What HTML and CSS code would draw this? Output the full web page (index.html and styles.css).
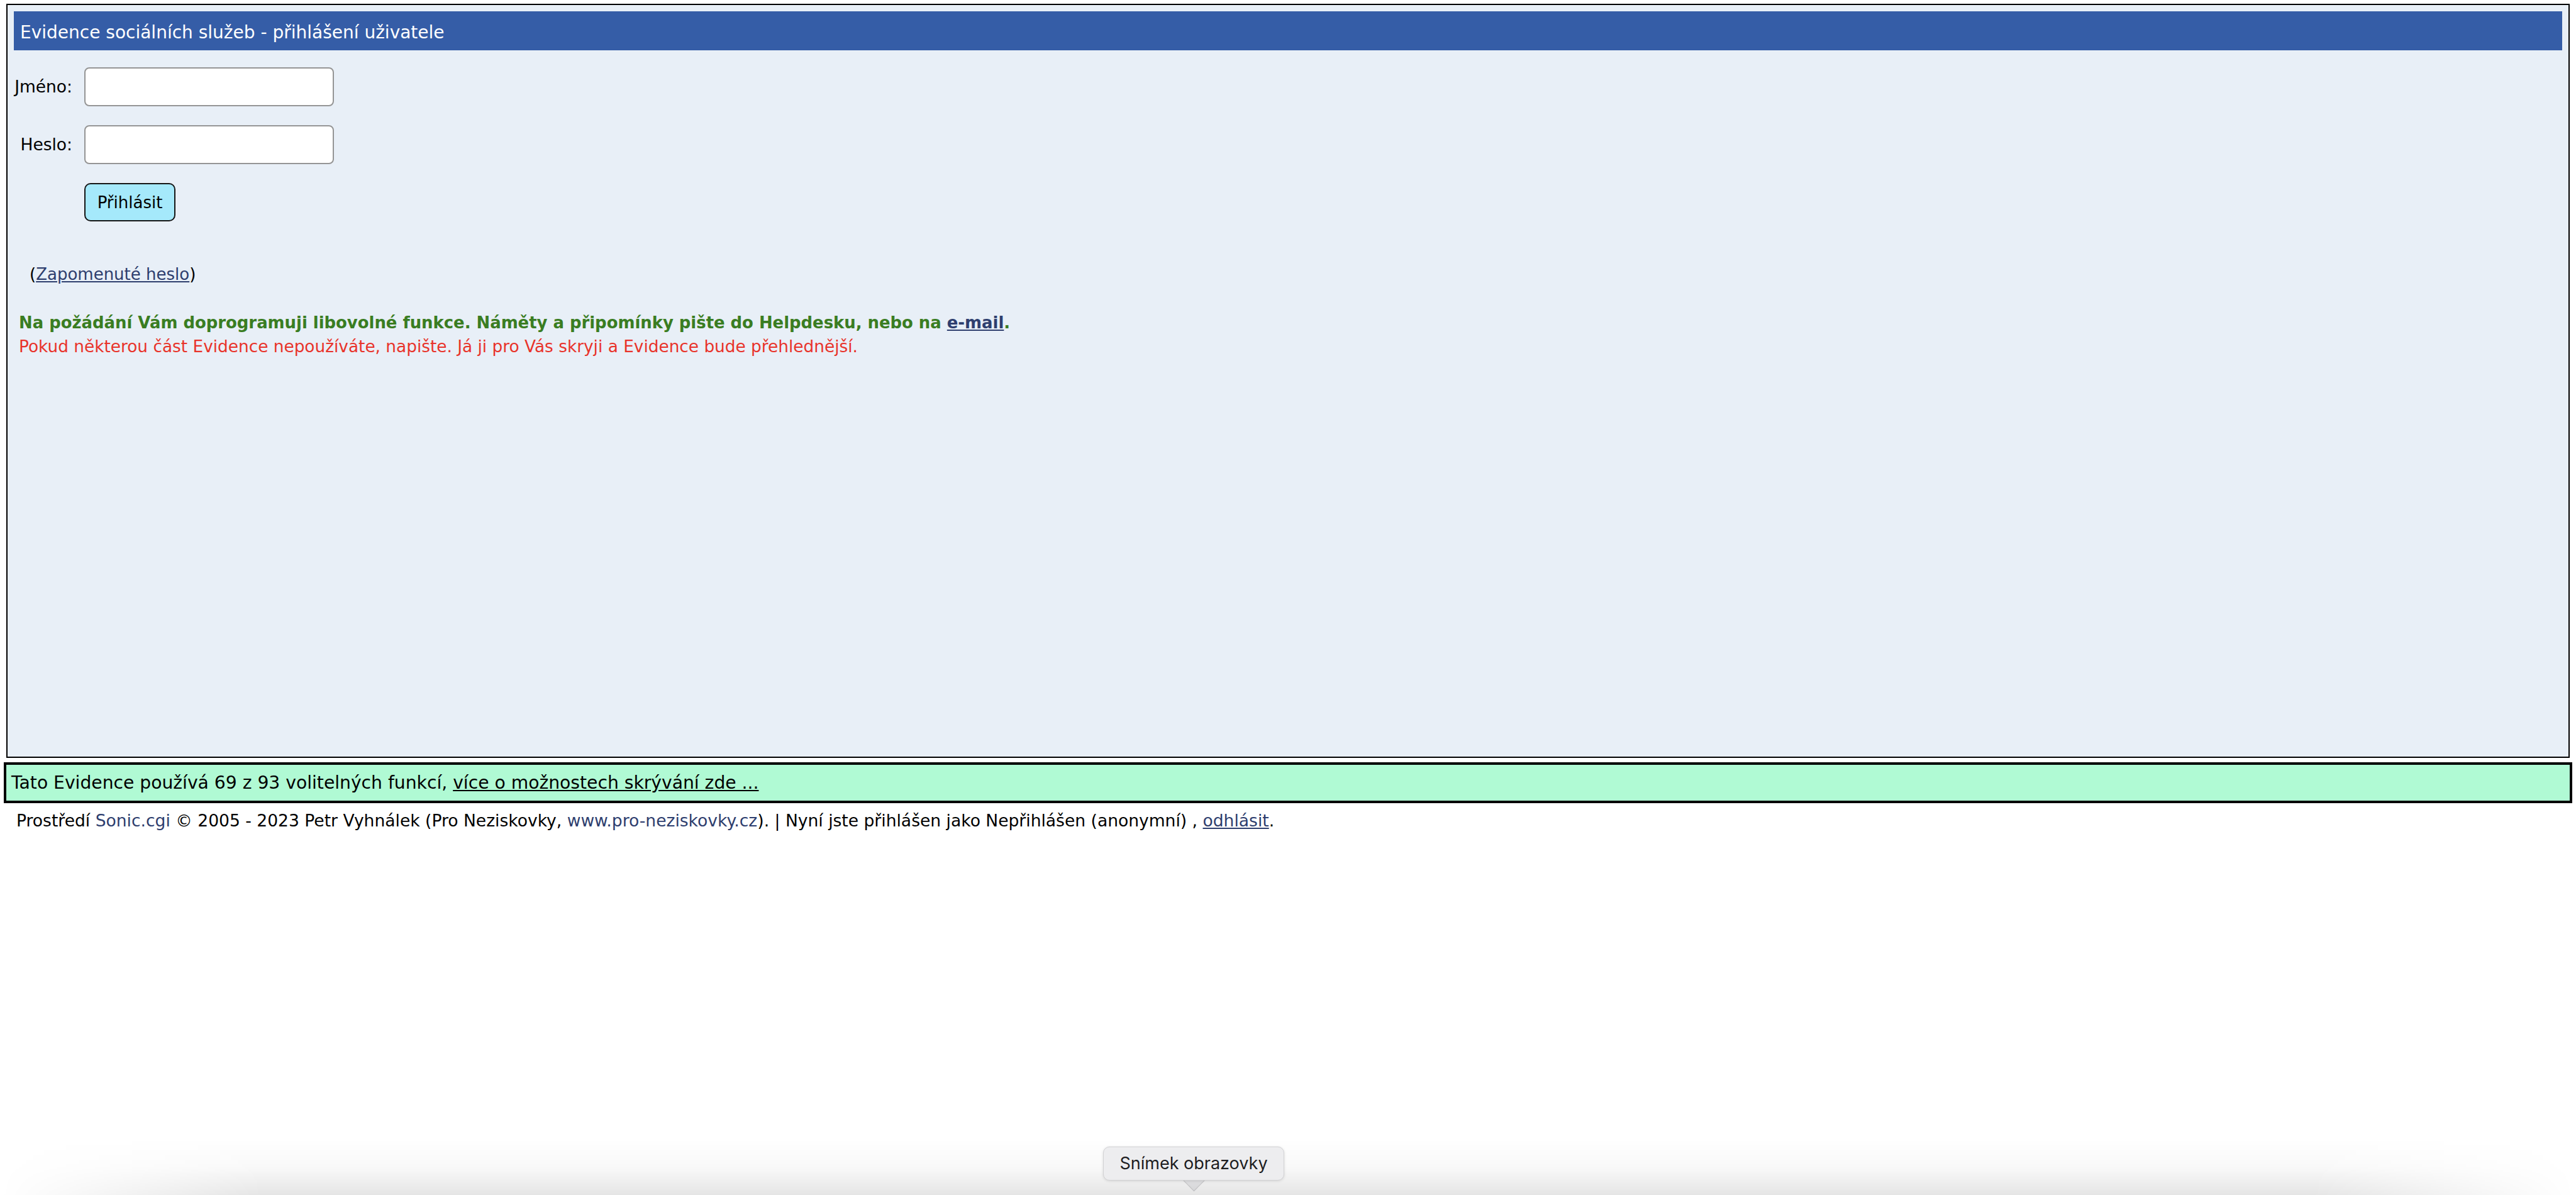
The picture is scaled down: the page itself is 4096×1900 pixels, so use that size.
FILE: index.html
```html
<!DOCTYPE html>
<html lang="cs">
<head>
<meta charset="utf-8">
<title>Evidence sociálních služeb - přihlášení uživatele</title>
<link rel="stylesheet" href="styles.css">
</head>
<body>
<div class="page">
  <div class="panel">
    <div class="panel-title">Evidence sociálních služeb - přihlášení uživatele</div>
    <form class="login-form">
      <label class="login-label" for="jmeno">Jméno:</label>
      <input class="login-input" id="jmeno" type="text">
      <label class="login-label" for="heslo">Heslo:</label>
      <input class="login-input" id="heslo" type="password">
      <button class="login-button" type="button">Přihlásit</button>
    </form>
    <p class="forgot">(<a href="#" class="link">Zapomenuté heslo</a>)</p>
    <p class="note-green">Na požádání Vám doprogramuji libovolné funkce. Náměty a připomínky pište do Helpdesku, nebo na <a href="#" class="link">e-mail</a>.</p>
    <p class="note-red">Pokud některou část Evidence nepoužíváte, napište. Já ji pro Vás skryji a Evidence bude přehlednější.</p>
  </div>
  <div class="features">Tato Evidence používá 69 z 93 volitelných funkcí, <a href="#" class="features-link">více o možnostech skrývání zde ...</a></div>
  <div class="footer">Prostředí <a href="#" class="link plain">Sonic.cgi</a> © 2005 - 2023 Petr Vyhnálek (Pro Neziskovky, <a href="#" class="link plain">www.pro-neziskovky.cz</a>). | Nyní jste přihlášen jako Nepřihlášen (anonymní) , <a href="#" class="link">odhlásit</a>.</div>
</div>
<div class="dock-shade"></div>
<div class="shot-tooltip">Snímek obrazovky</div>
</body>
</html>
```

FILE: styles.css
```css
html, body {
  margin: 0;
  padding: 0;
}

body {
  background: #ffffff;
  font-family: "DejaVu Sans", Verdana, sans-serif;
  font-size: 26px;
  line-height: 32px;
  color: #000000;
  overflow: hidden;
}

.page {
  padding-top: 6px;
}

.panel {
  box-sizing: border-box;
  height: 1199px;
  margin: 0 10px;
  border: 2px solid #000000;
  background: #e8eff7;
  padding: 10px;
}

.panel-title {
  box-sizing: border-box;
  height: 62px;
  padding: 17px 10px 0;
  background: #355da7;
  color: #ffffff;
  font-size: 28px;
  line-height: 33px;
}

.login-form {
  display: grid;
  grid-template-columns: 93px 397px;
  column-gap: 19px;
  row-gap: 30px;
  align-items: center;
  margin: 27px 0 0;
}

.login-label {
  text-align: right;
  font-size: 26.5px;
}

.login-input {
  box-sizing: border-box;
  width: 397px;
  height: 62px;
  margin: 0;
  padding: 0 10px;
  border: 2px solid #959595;
  border-radius: 8px;
  background: #ffffff;
  font: inherit;
  outline: none;
}

.login-button {
  grid-column: 2;
  justify-self: start;
  box-sizing: border-box;
  width: 145px;
  height: 61px;
  margin: 0;
  padding: 0;
  border: 2px solid #151515;
  border-radius: 10px;
  background: #a5e9fb;
  color: #000000;
  font-family: "DejaVu Sans", Verdana, sans-serif;
  font-size: 26px;
  line-height: 32px;
}

.forgot {
  margin: 68px 0 0 25px;
}

.note-green {
  margin: 45px 0 0 8px;
  color: #3a7d22;
  font-weight: bold;
  font-size: 25.9px;
}

.note-red {
  margin: 6px 0 0 8px;
  color: #e8332a;
  font-size: 26.35px;
}

.link {
  color: #2e3e6e;
}

.link.plain {
  text-decoration: none;
}

.features {
  margin: 7px 6px 0;
  border: 4px solid #000000;
  background: #b0fad4;
  padding: 12px 8px 12px;
  font-size: 28.2px;
  line-height: 33px;
}

.features-link {
  color: #000000;
}

.footer {
  margin-top: 12px;
  padding-left: 26px;
  font-size: 26.55px;
}

.dock-shade {
  position: absolute;
  left: 0;
  right: 0;
  bottom: 0;
  height: 90px;
  background: linear-gradient(to bottom, rgba(0, 0, 0, 0) 0%, rgba(0, 0, 0, 0.025) 50%, rgba(0, 0, 0, 0.1) 100%);
  -webkit-mask-image: linear-gradient(to right, transparent 0, #000 420px, #000 calc(100% - 420px), transparent 100%);
  mask-image: linear-gradient(to right, transparent 0, #000 420px, #000 calc(100% - 420px), transparent 100%);
}

.shot-tooltip {
  position: absolute;
  left: 1754px;
  top: 1823px;
  box-sizing: border-box;
  width: 288px;
  height: 54px;
  display: flex;
  align-items: center;
  justify-content: center;
  background: #ededef;
  border: 1px solid #d2d2d4;
  border-radius: 10px;
  box-shadow: 0 1px 4px rgba(0, 0, 0, 0.12);
  font-family: Inter, "Liberation Sans", sans-serif;
  font-size: 27px;
  color: #1d1d1f;
}

.shot-tooltip::after {
  content: "";
  position: absolute;
  left: 131px;
  bottom: -13px;
  width: 24px;
  height: 24px;
  background: #ededef;
  border-right: 1px solid #d2d2d4;
  border-bottom: 1px solid #d2d2d4;
  transform: rotate(45deg);
  z-index: -1;
}
```
